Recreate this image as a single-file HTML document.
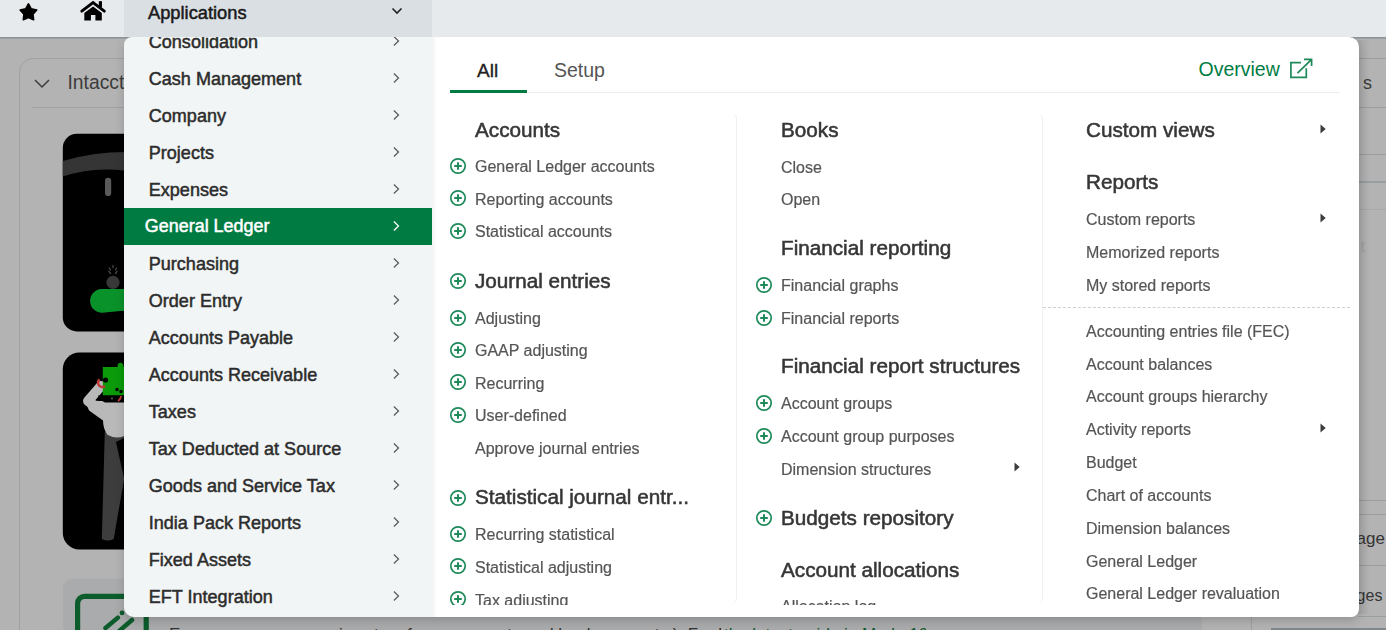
<!DOCTYPE html>
<html><head><meta charset="utf-8"><style>
html,body{margin:0;padding:0;}
body{width:1386px;height:630px;overflow:hidden;position:relative;background:#b3b3b3;font-family:'Liberation Sans',sans-serif;}
</style></head><body>
<div style="position:absolute;left:19px;top:58px;width:1233px;height:700px;border:1.8px solid #9ca1a4;border-radius:14px;box-sizing:border-box;"></div><svg style="position:absolute;left:33px;top:77.5px" width="18" height="12" viewBox="0 0 18 12"><path d="M2 2L9 9L16 2" fill="none" stroke="#3d3d3d" stroke-width="1.5"/></svg><div style="position:absolute;left:67.5px;top:73.30px;font-size:19.3px;line-height:1;font-weight:normal;color:#3b3b3b;white-space:nowrap;">Intacct</div><div style="position:absolute;left:32px;top:106.5px;width:100px;height:1.2px;background:#9ca1a4;"></div><svg style="position:absolute;left:0;top:0" width="1386" height="630" viewBox="0 0 1386 630">
<defs>
<clipPath id="c1"><rect x="62.8" y="133.8" width="120" height="197.6" rx="14"/></clipPath>
<clipPath id="c2"><rect x="62.8" y="352.6" width="120" height="196.8" rx="16.5"/></clipPath>
</defs>
<g clip-path="url(#c1)">
<rect x="0" y="0" width="1386" height="630" fill="#000"/>
<path d="M62 161.2 Q93 152.1 126 152.1 V170.8 Q93 166.4 62 176.8 Z" fill="#353535"/>
<rect x="105" y="177.8" width="6.2" height="18.3" rx="3.1" fill="#5a5a5a"/>
<circle cx="113" cy="282.4" r="6.6" fill="#383838"/>
<path d="M110.5 273.5l-1.6-2.2M115.5 273.5l1.6-2.2M110.5 270l-1.2-2M115.5 270l1.2-2M113 267.5v-2" stroke="#4a4a4a" stroke-width="1.3" stroke-linecap="round"/>
<path d="M102 289 H140 V310 Q120 310.5 102 312.8 A11.9 11.9 0 0 1 102 289Z" fill="#0a922a"/>
</g>
<g clip-path="url(#c2)">
<rect x="0" y="0" width="1386" height="630" fill="#000"/>
<path d="M104.8 432 H130 V445 L113.7 539 Q108 542 101.8 539 Z" fill="#3d3d3d"/>
<path d="M116 442 L124 438 L124 478 Z" fill="#000"/>
<path d="M86 401 L99 402 L130 402 L130 432 Q118 440 108 434 Q104 428 104 420 L90 410 Z" fill="#b9b9b9" stroke="#b9b9b9" stroke-width="2" stroke-linejoin="round"/>
<path d="M101 386 L88 401 L107 415" fill="none" stroke="#b9b9b9" stroke-width="10" stroke-linejoin="round" stroke-linecap="round"/>
<path d="M102.8 366.9 H117.5 Q117.5 362.8 120.5 362.8 Q123.5 362.8 123.5 366.9 H130 V395.5 H102.8Z" fill="#0a9a0a"/>
<path d="M98 395.5 H130 V402.5 H105 Q100 400.5 98 395.5Z" fill="#000"/>
<path d="M99.5 379.5 A4 4 0 1 0 105 386" fill="none" stroke="#c03a3a" stroke-width="2.6"/>
<circle cx="105.5" cy="380" r="2.6" fill="#000"/>
<circle cx="112" cy="398.5" r="1.1" fill="#5a5a5a"/>
<path d="M118 401 Q121 399 121 396" stroke="#c03a3a" stroke-width="1.8" fill="none"/>
<circle cx="117" cy="389.5" r="1.7" fill="#000"/>
<circle cx="121" cy="391.5" r="1.7" fill="#000"/>
</g>
<rect x="63.1" y="578.6" width="1139" height="80" rx="10" fill="#aaabac"/>
<rect x="77.6" y="596.4" width="68.6" height="60" rx="7" fill="none" stroke="#0d5c2c" stroke-width="5.2"/>
<path d="M105.5 628 L117.9 617.6" stroke="#0d5c2c" stroke-width="4.5" stroke-linecap="round"/>
<circle cx="122" cy="612.9" r="2.4" fill="#0d5c2c"/>
<path d="M118 632 L132 620" stroke="#0d5c2c" stroke-width="4.5" stroke-linecap="round"/>
</svg><div style="position:absolute;left:169px;top:625.5px;width:552px;height:10px;overflow:hidden;font-size:17px;line-height:1;color:#333;white-space:nowrap">Ensure your company is set up for e-payments and bank accounts ). For Mexico, use</div><div style="position:absolute;left:724px;top:625.5px;width:202px;height:10px;overflow:hidden;font-size:17px;line-height:1;color:#0d5c2c;white-space:nowrap">the latest guide in Mode 1099</div><div style="position:absolute;left:1358px;top:57.8px;width:30px;height:1.2px;background:#999ea1;"></div><div style="position:absolute;left:1358px;top:107.2px;width:30px;height:1.2px;background:#999ea1;"></div><div style="position:absolute;left:1358px;top:153.6px;width:30px;height:1.2px;background:#999ea1;"></div><div style="position:absolute;left:1358px;top:181.4px;width:30px;height:1.2px;background:#999ea1;"></div><div style="position:absolute;left:1358px;top:209.2px;width:30px;height:1px;background:#a7a9aa;"></div><div style="position:absolute;left:1358px;top:500.2px;width:30px;height:1.2px;background:#999ea1;"></div><div style="position:absolute;left:1358px;top:514.2px;width:30px;height:1.2px;background:#999ea1;"></div><div style="position:absolute;left:1358px;top:564.5px;width:30px;height:1.2px;background:#999ea1;"></div><div style="position:absolute;left:1358px;top:616px;width:30px;height:1.2px;background:#999ea1;"></div><div style="position:absolute;left:1271px;top:628.3px;width:120px;height:2px;background:#7f878b;"></div><div style="position:absolute;left:1251px;top:600px;width:1px;height:40px;background:#9ca1a4;"></div><div style="position:absolute;left:1363px;top:74.20px;font-size:18px;line-height:1;font-weight:normal;color:#3a3a3a;white-space:nowrap;">s</div><div style="position:absolute;left:1360.5px;top:238.90px;font-size:16px;line-height:1;font-weight:normal;color:#a3a3a3;white-space:nowrap;">t</div><div style="position:absolute;left:1356.5px;top:530.35px;font-size:17px;line-height:1;font-weight:normal;color:#333;white-space:nowrap;">age</div><div style="position:absolute;left:1356.6px;top:587.90px;font-size:16px;line-height:1;font-weight:normal;color:#333;white-space:nowrap;">ges</div><div style="position:absolute;left:1358px;top:40px;width:12px;height:574px;background:linear-gradient(to right, rgba(0,0,0,0.09), rgba(0,0,0,0));"></div><div style="position:absolute;left:123.6px;top:37px;width:1235.4px;height:580.2px;border-radius:8px 10px 8px 10px;box-shadow:0 4px 10px rgba(0,0,0,0.17);"></div><div style="position:absolute;left:0px;top:0px;width:1386px;height:36.5px;background:#e6eaed;"></div><div style="position:absolute;left:0px;top:36.6px;width:1386px;height:2.5px;background:linear-gradient(#8b9396 0%, #8d9497 45%, #a4a8a9 100%);"></div><div style="position:absolute;left:123.8px;top:0px;width:308.6px;height:36.5px;background:#d9dfe2;"></div><svg style="position:absolute;left:0;top:0" width="120" height="36" viewBox="0 0 120 36"><path d="M28.45 4.00L31.21 8.90L36.72 10.01L32.92 14.15L33.56 19.74L28.45 17.40L23.34 19.74L23.98 14.15L20.18 10.01L25.69 8.90Z" fill="#000" stroke="#000" stroke-width="1.7" stroke-linejoin="round"/><path d="M81.8 11.2L93.05 2.6L104.3 11.2" fill="none" stroke="#000" stroke-width="2.9" stroke-linecap="round" stroke-linejoin="miter"/><rect x="98.8" y="1.2" width="3.2" height="6" fill="#000"/><path d="M84.3 13.1L93.05 6.6L101.8 13.1V20.2Q101.8 20.6 101.4 20.6H95.4V14.9H90.9V20.6H84.7Q84.3 20.6 84.3 20.2Z" fill="#000"/></svg><div style="position:absolute;left:148px;top:4.05px;font-size:18.3px;line-height:1;font-weight:normal;color:#1a1a1a;white-space:nowrap;-webkit-text-stroke:0.5px #1a1a1a;">Applications</div><svg style="position:absolute;left:391px;top:7px" width="12" height="8" viewBox="0 0 12 8"><path d="M1.5 1.5L6 6L10.5 1.5" fill="none" stroke="#222" stroke-width="1.6"/></svg><div style="position:absolute;left:123.6px;top:37px;width:308.4px;height:580.2px;background:#f2f5f6;border-radius:8px 0 0 10px;"></div><div style="position:absolute;left:123px;top:37px;width:309px;height:580px;overflow:hidden;border-radius:8px 0 0 10px;"><div style="position:absolute;left:25.8px;top:-4.24px;font-size:18.05px;line-height:1;font-weight:normal;color:#2c2c2c;white-space:nowrap;-webkit-text-stroke:0.5px #2c2c2c;">Consolidation</div><svg style="position:absolute;left:269px;top:-2.30px" width="9" height="12" viewBox="0 0 9 12"><path d="M1.9 1.5L6.5 6L1.9 10.5" fill="none" stroke="#5a5a5a" stroke-width="1.25"/></svg><div style="position:absolute;left:25.8px;top:32.80px;font-size:18.05px;line-height:1;font-weight:normal;color:#2c2c2c;white-space:nowrap;-webkit-text-stroke:0.5px #2c2c2c;">Cash Management</div><svg style="position:absolute;left:269px;top:34.74px" width="9" height="12" viewBox="0 0 9 12"><path d="M1.9 1.5L6.5 6L1.9 10.5" fill="none" stroke="#5a5a5a" stroke-width="1.25"/></svg><div style="position:absolute;left:25.8px;top:69.84px;font-size:18.05px;line-height:1;font-weight:normal;color:#2c2c2c;white-space:nowrap;-webkit-text-stroke:0.5px #2c2c2c;">Company</div><svg style="position:absolute;left:269px;top:71.78px" width="9" height="12" viewBox="0 0 9 12"><path d="M1.9 1.5L6.5 6L1.9 10.5" fill="none" stroke="#5a5a5a" stroke-width="1.25"/></svg><div style="position:absolute;left:25.8px;top:106.88px;font-size:18.05px;line-height:1;font-weight:normal;color:#2c2c2c;white-space:nowrap;-webkit-text-stroke:0.5px #2c2c2c;">Projects</div><svg style="position:absolute;left:269px;top:108.82px" width="9" height="12" viewBox="0 0 9 12"><path d="M1.9 1.5L6.5 6L1.9 10.5" fill="none" stroke="#5a5a5a" stroke-width="1.25"/></svg><div style="position:absolute;left:25.8px;top:143.92px;font-size:18.05px;line-height:1;font-weight:normal;color:#2c2c2c;white-space:nowrap;-webkit-text-stroke:0.5px #2c2c2c;">Expenses</div><svg style="position:absolute;left:269px;top:145.86px" width="9" height="12" viewBox="0 0 9 12"><path d="M1.9 1.5L6.5 6L1.9 10.5" fill="none" stroke="#5a5a5a" stroke-width="1.25"/></svg><div style="position:absolute;left:0.7px;top:170.9px;width:309px;height:36.9px;background:#007c43;"></div><div style="position:absolute;left:21.8px;top:181.04px;font-size:17.95px;line-height:1;font-weight:normal;color:#fff;white-space:nowrap;-webkit-text-stroke:0.5px #fff;">General Ledger</div><svg style="position:absolute;left:269px;top:182.90px" width="9" height="12" viewBox="0 0 9 12"><path d="M1.9 1.5L6.5 6L1.9 10.5" fill="none" stroke="#fff" stroke-width="1.25"/></svg><div style="position:absolute;left:25.8px;top:218.00px;font-size:18.05px;line-height:1;font-weight:normal;color:#2c2c2c;white-space:nowrap;-webkit-text-stroke:0.5px #2c2c2c;">Purchasing</div><svg style="position:absolute;left:269px;top:219.94px" width="9" height="12" viewBox="0 0 9 12"><path d="M1.9 1.5L6.5 6L1.9 10.5" fill="none" stroke="#5a5a5a" stroke-width="1.25"/></svg><div style="position:absolute;left:25.8px;top:255.04px;font-size:18.05px;line-height:1;font-weight:normal;color:#2c2c2c;white-space:nowrap;-webkit-text-stroke:0.5px #2c2c2c;">Order Entry</div><svg style="position:absolute;left:269px;top:256.98px" width="9" height="12" viewBox="0 0 9 12"><path d="M1.9 1.5L6.5 6L1.9 10.5" fill="none" stroke="#5a5a5a" stroke-width="1.25"/></svg><div style="position:absolute;left:25.8px;top:292.08px;font-size:18.05px;line-height:1;font-weight:normal;color:#2c2c2c;white-space:nowrap;-webkit-text-stroke:0.5px #2c2c2c;">Accounts Payable</div><svg style="position:absolute;left:269px;top:294.02px" width="9" height="12" viewBox="0 0 9 12"><path d="M1.9 1.5L6.5 6L1.9 10.5" fill="none" stroke="#5a5a5a" stroke-width="1.25"/></svg><div style="position:absolute;left:25.8px;top:329.12px;font-size:18.05px;line-height:1;font-weight:normal;color:#2c2c2c;white-space:nowrap;-webkit-text-stroke:0.5px #2c2c2c;">Accounts Receivable</div><svg style="position:absolute;left:269px;top:331.06px" width="9" height="12" viewBox="0 0 9 12"><path d="M1.9 1.5L6.5 6L1.9 10.5" fill="none" stroke="#5a5a5a" stroke-width="1.25"/></svg><div style="position:absolute;left:25.8px;top:366.16px;font-size:18.05px;line-height:1;font-weight:normal;color:#2c2c2c;white-space:nowrap;-webkit-text-stroke:0.5px #2c2c2c;">Taxes</div><svg style="position:absolute;left:269px;top:368.10px" width="9" height="12" viewBox="0 0 9 12"><path d="M1.9 1.5L6.5 6L1.9 10.5" fill="none" stroke="#5a5a5a" stroke-width="1.25"/></svg><div style="position:absolute;left:25.8px;top:403.20px;font-size:18.05px;line-height:1;font-weight:normal;color:#2c2c2c;white-space:nowrap;-webkit-text-stroke:0.5px #2c2c2c;">Tax Deducted at Source</div><svg style="position:absolute;left:269px;top:405.14px" width="9" height="12" viewBox="0 0 9 12"><path d="M1.9 1.5L6.5 6L1.9 10.5" fill="none" stroke="#5a5a5a" stroke-width="1.25"/></svg><div style="position:absolute;left:25.8px;top:440.24px;font-size:18.05px;line-height:1;font-weight:normal;color:#2c2c2c;white-space:nowrap;-webkit-text-stroke:0.5px #2c2c2c;">Goods and Service Tax</div><svg style="position:absolute;left:269px;top:442.18px" width="9" height="12" viewBox="0 0 9 12"><path d="M1.9 1.5L6.5 6L1.9 10.5" fill="none" stroke="#5a5a5a" stroke-width="1.25"/></svg><div style="position:absolute;left:25.8px;top:477.28px;font-size:18.05px;line-height:1;font-weight:normal;color:#2c2c2c;white-space:nowrap;-webkit-text-stroke:0.5px #2c2c2c;">India Pack Reports</div><svg style="position:absolute;left:269px;top:479.22px" width="9" height="12" viewBox="0 0 9 12"><path d="M1.9 1.5L6.5 6L1.9 10.5" fill="none" stroke="#5a5a5a" stroke-width="1.25"/></svg><div style="position:absolute;left:25.8px;top:514.32px;font-size:18.05px;line-height:1;font-weight:normal;color:#2c2c2c;white-space:nowrap;-webkit-text-stroke:0.5px #2c2c2c;">Fixed Assets</div><svg style="position:absolute;left:269px;top:516.26px" width="9" height="12" viewBox="0 0 9 12"><path d="M1.9 1.5L6.5 6L1.9 10.5" fill="none" stroke="#5a5a5a" stroke-width="1.25"/></svg><div style="position:absolute;left:25.8px;top:551.36px;font-size:18.05px;line-height:1;font-weight:normal;color:#2c2c2c;white-space:nowrap;-webkit-text-stroke:0.5px #2c2c2c;">EFT Integration</div><svg style="position:absolute;left:269px;top:553.30px" width="9" height="12" viewBox="0 0 9 12"><path d="M1.9 1.5L6.5 6L1.9 10.5" fill="none" stroke="#5a5a5a" stroke-width="1.25"/></svg></div><div style="position:absolute;left:432px;top:37px;width:927px;height:580.2px;background:#fff;border-radius:0 10px 8px 0;"></div><div style="position:absolute;left:432px;top:37px;width:5px;height:580.5px;background:linear-gradient(to right, rgba(0,0,0,0.05), rgba(0,0,0,0));"></div><div style="position:absolute;left:477px;top:61.05px;font-size:19px;line-height:1;font-weight:normal;color:#222;white-space:nowrap;-webkit-text-stroke:0.35px #222;">All</div><div style="position:absolute;left:554px;top:60.62px;font-size:19.5px;line-height:1;font-weight:normal;color:#555;white-space:nowrap;">Setup</div><div style="position:absolute;left:450px;top:92.3px;width:890px;height:1.2px;background:#ececec;"></div><div style="position:absolute;left:450px;top:89.5px;width:77px;height:3.4px;background:#007c43;"></div><div style="position:absolute;left:1198.5px;top:59.83px;font-size:19.5px;line-height:1;font-weight:normal;color:#007c43;white-space:nowrap;">Overview</div><svg style="position:absolute;left:1288px;top:57px" width="26" height="24" viewBox="0 0 26 24"><path d="M13 5.7H2.9V20.4H18.3V11.2" fill="none" stroke="#1e8a5a" stroke-width="1.7"/><path d="M9.5 16.2L23.6 2.3M16 2.3H23.6V9" fill="none" stroke="#1e8a5a" stroke-width="1.7"/></svg><div style="position:absolute;left:728px;top:113px;width:9px;height:491px;border-right:1px solid #f0f0f0;border-radius:0 6px 6px 0;box-sizing:border-box;"></div><div style="position:absolute;left:1034px;top:113px;width:9px;height:491px;border-right:1px solid #f0f0f0;border-radius:0 6px 6px 0;box-sizing:border-box;"></div><div style="position:absolute;left:0;top:0;width:1386px;height:630px;will-change:transform;"><div style="position:absolute;left:0;top:0;width:1386px;height:605.2px;overflow:hidden;"><div style="position:absolute;left:475px;top:119.81px;font-size:20.7px;line-height:1;font-weight:normal;color:#363636;white-space:nowrap;-webkit-text-stroke:0.55px #363636;">Accounts</div><div style="position:absolute;left:475px;top:159.40px;font-size:16px;line-height:1;font-weight:normal;color:#555;white-space:nowrap;-webkit-text-stroke:0.2px #555;">General Ledger accounts</div><svg style="position:absolute;left:449.00px;top:157.00px" width="18" height="18" viewBox="0 0 18 18"><circle cx="9" cy="9" r="7.2" fill="none" stroke="#1e8a5a" stroke-width="1.7"/><path d="M9 5.2V12.8M5.2 9H12.8" stroke="#1e8a5a" stroke-width="2"/></svg><div style="position:absolute;left:475px;top:191.70px;font-size:16px;line-height:1;font-weight:normal;color:#555;white-space:nowrap;-webkit-text-stroke:0.2px #555;">Reporting accounts</div><svg style="position:absolute;left:449.00px;top:189.30px" width="18" height="18" viewBox="0 0 18 18"><circle cx="9" cy="9" r="7.2" fill="none" stroke="#1e8a5a" stroke-width="1.7"/><path d="M9 5.2V12.8M5.2 9H12.8" stroke="#1e8a5a" stroke-width="2"/></svg><div style="position:absolute;left:475px;top:224.30px;font-size:16px;line-height:1;font-weight:normal;color:#555;white-space:nowrap;-webkit-text-stroke:0.2px #555;">Statistical accounts</div><svg style="position:absolute;left:449.00px;top:221.90px" width="18" height="18" viewBox="0 0 18 18"><circle cx="9" cy="9" r="7.2" fill="none" stroke="#1e8a5a" stroke-width="1.7"/><path d="M9 5.2V12.8M5.2 9H12.8" stroke="#1e8a5a" stroke-width="2"/></svg><div style="position:absolute;left:475px;top:271.11px;font-size:20.7px;line-height:1;font-weight:normal;color:#363636;white-space:nowrap;-webkit-text-stroke:0.55px #363636;">Journal entries</div><svg style="position:absolute;left:449.00px;top:272.30px" width="18" height="18" viewBox="0 0 18 18"><circle cx="9" cy="9" r="7.2" fill="none" stroke="#1e8a5a" stroke-width="1.7"/><path d="M9 5.2V12.8M5.2 9H12.8" stroke="#1e8a5a" stroke-width="2"/></svg><div style="position:absolute;left:475px;top:310.90px;font-size:16px;line-height:1;font-weight:normal;color:#555;white-space:nowrap;-webkit-text-stroke:0.2px #555;">Adjusting</div><svg style="position:absolute;left:449.00px;top:308.50px" width="18" height="18" viewBox="0 0 18 18"><circle cx="9" cy="9" r="7.2" fill="none" stroke="#1e8a5a" stroke-width="1.7"/><path d="M9 5.2V12.8M5.2 9H12.8" stroke="#1e8a5a" stroke-width="2"/></svg><div style="position:absolute;left:475px;top:342.90px;font-size:16px;line-height:1;font-weight:normal;color:#555;white-space:nowrap;-webkit-text-stroke:0.2px #555;">GAAP adjusting</div><svg style="position:absolute;left:449.00px;top:340.50px" width="18" height="18" viewBox="0 0 18 18"><circle cx="9" cy="9" r="7.2" fill="none" stroke="#1e8a5a" stroke-width="1.7"/><path d="M9 5.2V12.8M5.2 9H12.8" stroke="#1e8a5a" stroke-width="2"/></svg><div style="position:absolute;left:475px;top:375.70px;font-size:16px;line-height:1;font-weight:normal;color:#555;white-space:nowrap;-webkit-text-stroke:0.2px #555;">Recurring</div><svg style="position:absolute;left:449.00px;top:373.30px" width="18" height="18" viewBox="0 0 18 18"><circle cx="9" cy="9" r="7.2" fill="none" stroke="#1e8a5a" stroke-width="1.7"/><path d="M9 5.2V12.8M5.2 9H12.8" stroke="#1e8a5a" stroke-width="2"/></svg><div style="position:absolute;left:475px;top:408.40px;font-size:16px;line-height:1;font-weight:normal;color:#555;white-space:nowrap;-webkit-text-stroke:0.2px #555;">User-defined</div><svg style="position:absolute;left:449.00px;top:406.00px" width="18" height="18" viewBox="0 0 18 18"><circle cx="9" cy="9" r="7.2" fill="none" stroke="#1e8a5a" stroke-width="1.7"/><path d="M9 5.2V12.8M5.2 9H12.8" stroke="#1e8a5a" stroke-width="2"/></svg><div style="position:absolute;left:475px;top:441.10px;font-size:16px;line-height:1;font-weight:normal;color:#555;white-space:nowrap;-webkit-text-stroke:0.2px #555;">Approve journal entries</div><div style="position:absolute;left:475px;top:487.30px;font-size:20.7px;line-height:1;font-weight:normal;color:#363636;white-space:nowrap;-webkit-text-stroke:0.55px #363636;">Statistical journal entr...</div><svg style="position:absolute;left:449.00px;top:488.50px" width="18" height="18" viewBox="0 0 18 18"><circle cx="9" cy="9" r="7.2" fill="none" stroke="#1e8a5a" stroke-width="1.7"/><path d="M9 5.2V12.8M5.2 9H12.8" stroke="#1e8a5a" stroke-width="2"/></svg><div style="position:absolute;left:475px;top:526.90px;font-size:16px;line-height:1;font-weight:normal;color:#555;white-space:nowrap;-webkit-text-stroke:0.2px #555;">Recurring statistical</div><svg style="position:absolute;left:449.00px;top:524.50px" width="18" height="18" viewBox="0 0 18 18"><circle cx="9" cy="9" r="7.2" fill="none" stroke="#1e8a5a" stroke-width="1.7"/><path d="M9 5.2V12.8M5.2 9H12.8" stroke="#1e8a5a" stroke-width="2"/></svg><div style="position:absolute;left:475px;top:559.80px;font-size:16px;line-height:1;font-weight:normal;color:#555;white-space:nowrap;-webkit-text-stroke:0.2px #555;">Statistical adjusting</div><svg style="position:absolute;left:449.00px;top:557.40px" width="18" height="18" viewBox="0 0 18 18"><circle cx="9" cy="9" r="7.2" fill="none" stroke="#1e8a5a" stroke-width="1.7"/><path d="M9 5.2V12.8M5.2 9H12.8" stroke="#1e8a5a" stroke-width="2"/></svg><div style="position:absolute;left:475px;top:592.60px;font-size:16px;line-height:1;font-weight:normal;color:#555;white-space:nowrap;-webkit-text-stroke:0.2px #555;">Tax adjusting</div><svg style="position:absolute;left:449.00px;top:590.20px" width="18" height="18" viewBox="0 0 18 18"><circle cx="9" cy="9" r="7.2" fill="none" stroke="#1e8a5a" stroke-width="1.7"/><path d="M9 5.2V12.8M5.2 9H12.8" stroke="#1e8a5a" stroke-width="2"/></svg><div style="position:absolute;left:781px;top:119.81px;font-size:20.7px;line-height:1;font-weight:normal;color:#363636;white-space:nowrap;-webkit-text-stroke:0.55px #363636;">Books</div><div style="position:absolute;left:781px;top:159.60px;font-size:16px;line-height:1;font-weight:normal;color:#555;white-space:nowrap;-webkit-text-stroke:0.2px #555;">Close</div><div style="position:absolute;left:781px;top:191.90px;font-size:16px;line-height:1;font-weight:normal;color:#555;white-space:nowrap;-webkit-text-stroke:0.2px #555;">Open</div><div style="position:absolute;left:781px;top:237.61px;font-size:20.7px;line-height:1;font-weight:normal;color:#363636;white-space:nowrap;-webkit-text-stroke:0.55px #363636;">Financial reporting</div><div style="position:absolute;left:781px;top:277.90px;font-size:16px;line-height:1;font-weight:normal;color:#555;white-space:nowrap;-webkit-text-stroke:0.2px #555;">Financial graphs</div><svg style="position:absolute;left:755.00px;top:275.50px" width="18" height="18" viewBox="0 0 18 18"><circle cx="9" cy="9" r="7.2" fill="none" stroke="#1e8a5a" stroke-width="1.7"/><path d="M9 5.2V12.8M5.2 9H12.8" stroke="#1e8a5a" stroke-width="2"/></svg><div style="position:absolute;left:781px;top:311.00px;font-size:16px;line-height:1;font-weight:normal;color:#555;white-space:nowrap;-webkit-text-stroke:0.2px #555;">Financial reports</div><svg style="position:absolute;left:755.00px;top:308.60px" width="18" height="18" viewBox="0 0 18 18"><circle cx="9" cy="9" r="7.2" fill="none" stroke="#1e8a5a" stroke-width="1.7"/><path d="M9 5.2V12.8M5.2 9H12.8" stroke="#1e8a5a" stroke-width="2"/></svg><div style="position:absolute;left:781px;top:356.40px;font-size:20.7px;line-height:1;font-weight:normal;color:#363636;white-space:nowrap;-webkit-text-stroke:0.55px #363636;">Financial report structures</div><div style="position:absolute;left:781px;top:396.40px;font-size:16px;line-height:1;font-weight:normal;color:#555;white-space:nowrap;-webkit-text-stroke:0.2px #555;">Account groups</div><svg style="position:absolute;left:755.00px;top:394.00px" width="18" height="18" viewBox="0 0 18 18"><circle cx="9" cy="9" r="7.2" fill="none" stroke="#1e8a5a" stroke-width="1.7"/><path d="M9 5.2V12.8M5.2 9H12.8" stroke="#1e8a5a" stroke-width="2"/></svg><div style="position:absolute;left:781px;top:429.40px;font-size:16px;line-height:1;font-weight:normal;color:#555;white-space:nowrap;-webkit-text-stroke:0.2px #555;">Account group purposes</div><svg style="position:absolute;left:755.00px;top:427.00px" width="18" height="18" viewBox="0 0 18 18"><circle cx="9" cy="9" r="7.2" fill="none" stroke="#1e8a5a" stroke-width="1.7"/><path d="M9 5.2V12.8M5.2 9H12.8" stroke="#1e8a5a" stroke-width="2"/></svg><div style="position:absolute;left:781px;top:462.10px;font-size:16px;line-height:1;font-weight:normal;color:#555;white-space:nowrap;-webkit-text-stroke:0.2px #555;">Dimension structures</div><div style="position:absolute;left:781px;top:507.80px;font-size:20.7px;line-height:1;font-weight:normal;color:#363636;white-space:nowrap;-webkit-text-stroke:0.55px #363636;">Budgets repository</div><svg style="position:absolute;left:755.00px;top:509.00px" width="18" height="18" viewBox="0 0 18 18"><circle cx="9" cy="9" r="7.2" fill="none" stroke="#1e8a5a" stroke-width="1.7"/><path d="M9 5.2V12.8M5.2 9H12.8" stroke="#1e8a5a" stroke-width="2"/></svg><div style="position:absolute;left:781px;top:560.10px;font-size:20.7px;line-height:1;font-weight:normal;color:#363636;white-space:nowrap;-webkit-text-stroke:0.55px #363636;">Account allocations</div><div style="position:absolute;left:781px;top:599.40px;font-size:16px;line-height:1;font-weight:normal;color:#555;white-space:nowrap;-webkit-text-stroke:0.2px #555;">Allocation log</div></div><div style="position:absolute;left:1086px;top:119.50px;font-size:20.7px;line-height:1;font-weight:normal;color:#363636;white-space:nowrap;-webkit-text-stroke:0.55px #363636;">Custom views</div><div style="position:absolute;left:1086px;top:172.11px;font-size:20.7px;line-height:1;font-weight:normal;color:#363636;white-space:nowrap;-webkit-text-stroke:0.55px #363636;">Reports</div><div style="position:absolute;left:1086px;top:212.40px;font-size:16px;line-height:1;font-weight:normal;color:#555;white-space:nowrap;-webkit-text-stroke:0.2px #555;">Custom reports</div><div style="position:absolute;left:1086px;top:245.10px;font-size:16px;line-height:1;font-weight:normal;color:#555;white-space:nowrap;-webkit-text-stroke:0.2px #555;">Memorized reports</div><div style="position:absolute;left:1086px;top:278.10px;font-size:16px;line-height:1;font-weight:normal;color:#555;white-space:nowrap;-webkit-text-stroke:0.2px #555;">My stored reports</div><div style="position:absolute;left:1086px;top:324.00px;font-size:16px;line-height:1;font-weight:normal;color:#555;white-space:nowrap;-webkit-text-stroke:0.2px #555;">Accounting entries file (FEC)</div><div style="position:absolute;left:1086px;top:356.70px;font-size:16px;line-height:1;font-weight:normal;color:#555;white-space:nowrap;-webkit-text-stroke:0.2px #555;">Account balances</div><div style="position:absolute;left:1086px;top:389.40px;font-size:16px;line-height:1;font-weight:normal;color:#555;white-space:nowrap;-webkit-text-stroke:0.2px #555;">Account groups hierarchy</div><div style="position:absolute;left:1086px;top:421.80px;font-size:16px;line-height:1;font-weight:normal;color:#555;white-space:nowrap;-webkit-text-stroke:0.2px #555;">Activity reports</div><div style="position:absolute;left:1086px;top:454.80px;font-size:16px;line-height:1;font-weight:normal;color:#555;white-space:nowrap;-webkit-text-stroke:0.2px #555;">Budget</div><div style="position:absolute;left:1086px;top:488.40px;font-size:16px;line-height:1;font-weight:normal;color:#555;white-space:nowrap;-webkit-text-stroke:0.2px #555;">Chart of accounts</div><div style="position:absolute;left:1086px;top:520.90px;font-size:16px;line-height:1;font-weight:normal;color:#555;white-space:nowrap;-webkit-text-stroke:0.2px #555;">Dimension balances</div><div style="position:absolute;left:1086px;top:553.80px;font-size:16px;line-height:1;font-weight:normal;color:#555;white-space:nowrap;-webkit-text-stroke:0.2px #555;">General Ledger</div><div style="position:absolute;left:1086px;top:585.80px;font-size:16px;line-height:1;font-weight:normal;color:#555;white-space:nowrap;-webkit-text-stroke:0.2px #555;">General Ledger revaluation</div></div><svg style="position:absolute;left:1014.2px;top:462px" width="6" height="10" viewBox="0 0 6 10"><path d="M0.5 0.5L5.7 5L0.5 9.5Z" fill="#3d3d3d"/></svg><svg style="position:absolute;left:1319.6px;top:124.4px" width="6" height="10" viewBox="0 0 6 10"><path d="M0.5 0.5L5.7 5L0.5 9.5Z" fill="#3d3d3d"/></svg><svg style="position:absolute;left:1319.6px;top:212.6px" width="6" height="10" viewBox="0 0 6 10"><path d="M0.5 0.5L5.7 5L0.5 9.5Z" fill="#3d3d3d"/></svg><svg style="position:absolute;left:1319.6px;top:422.6px" width="6" height="10" viewBox="0 0 6 10"><path d="M0.5 0.5L5.7 5L0.5 9.5Z" fill="#3d3d3d"/></svg><div style="position:absolute;left:1043px;top:306.5px;width:307px;height:0px;border-top:1px dashed #cfcfcf;"></div>
</body></html>
